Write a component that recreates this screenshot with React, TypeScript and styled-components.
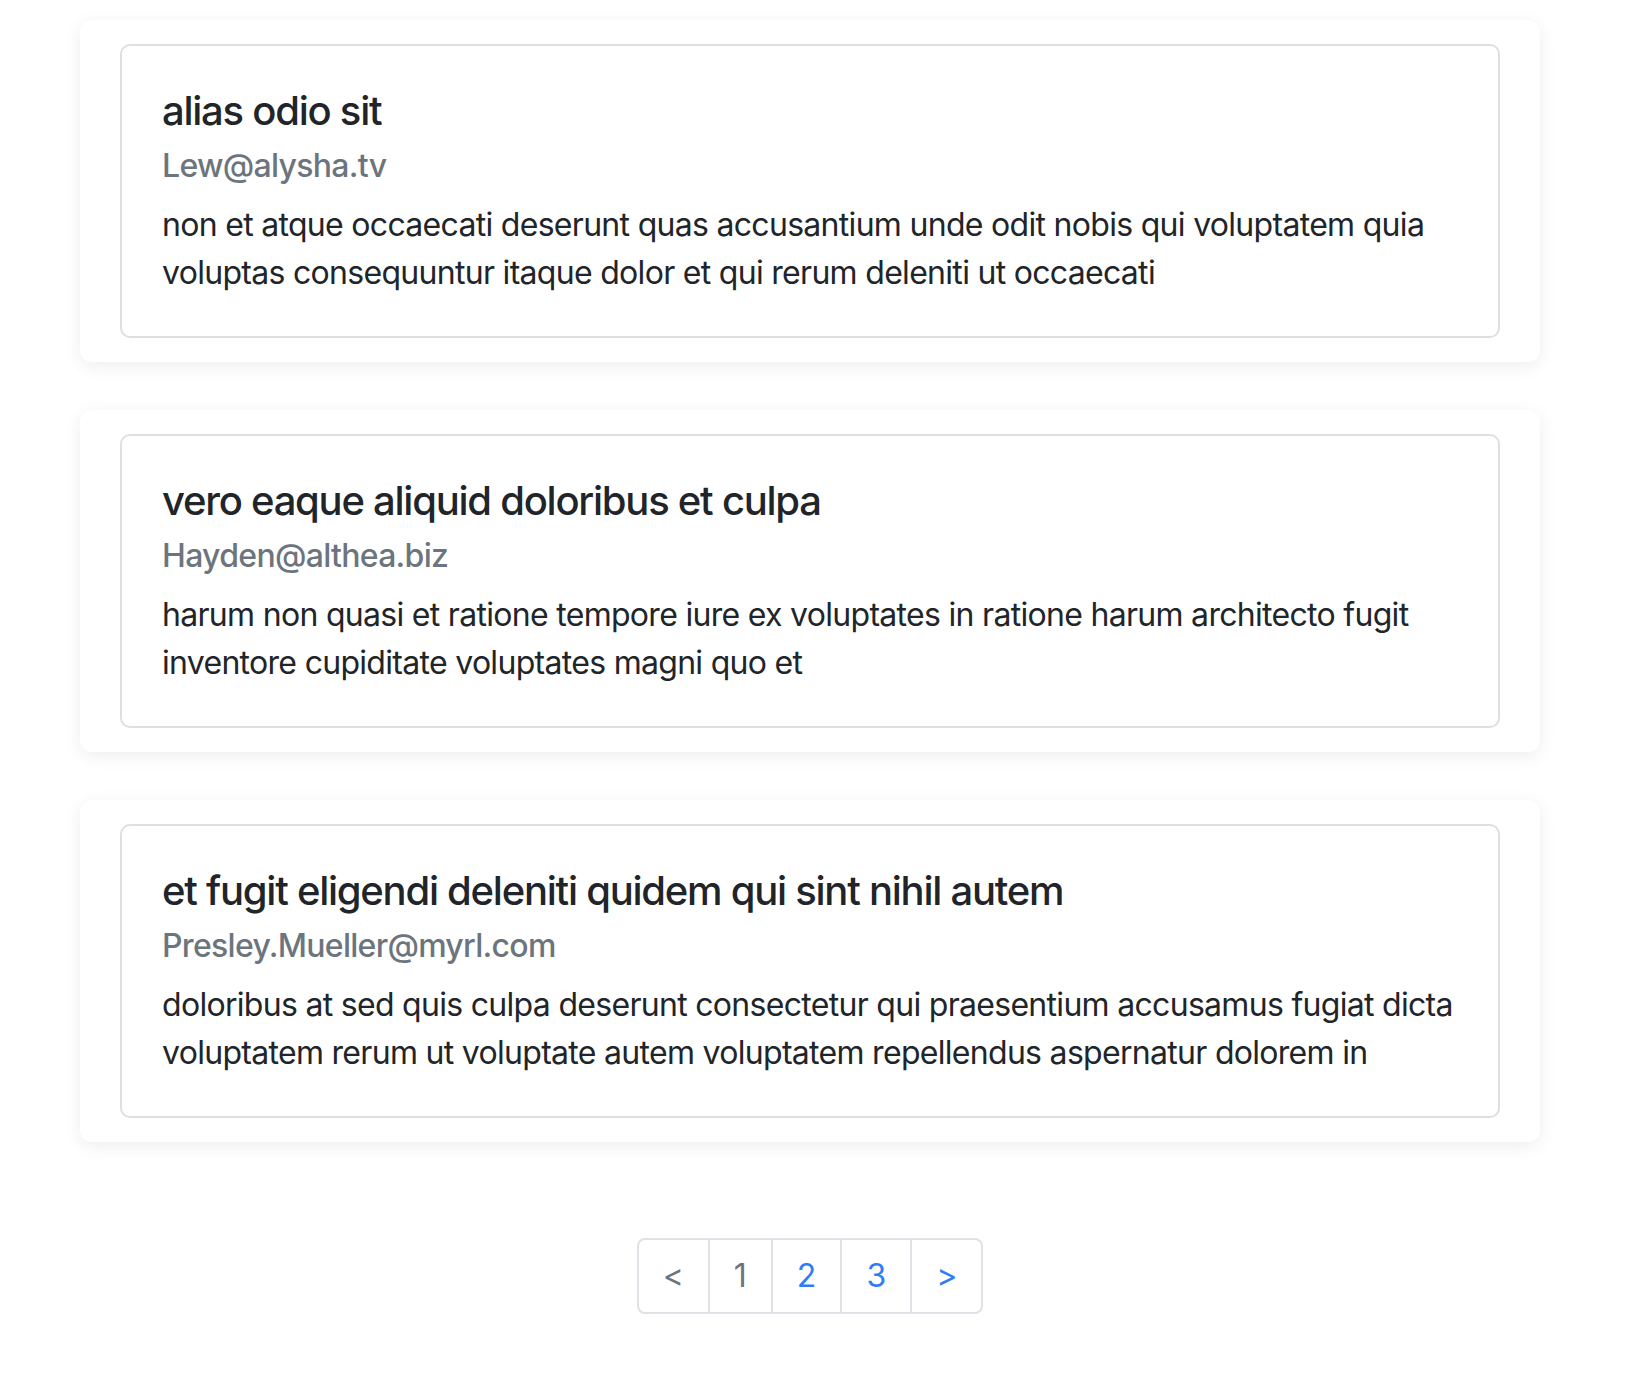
import styled, { createGlobalStyle } from "styled-components";

type Post = {
  id: number;
  title: string;
  email: string;
  body: string;
};

const posts: Post[] = [
  {
    id: 1,
    title: "alias odio sit",
    email: "Lew@alysha.tv",
    body: "non et atque occaecati deserunt quas accusantium unde odit nobis qui voluptatem quia voluptas consequuntur itaque dolor et qui rerum deleniti ut occaecati",
  },
  {
    id: 2,
    title: "vero eaque aliquid doloribus et culpa",
    email: "Hayden@althea.biz",
    body: "harum non quasi et ratione tempore iure ex voluptates in ratione harum architecto fugit inventore cupiditate voluptates magni quo et",
  },
  {
    id: 3,
    title: "et fugit eligendi deleniti quidem qui sint nihil autem",
    email: "Presley.Mueller@myrl.com",
    body: "doloribus at sed quis culpa deserunt consectetur qui praesentium accusamus fugiat dicta voluptatem rerum ut voluptate autem voluptatem repellendus aspernatur dolorem in",
  },
];

const pages = ["<", "1", "2", "3", ">"];
const currentPage = "1";

const App: React.FC = () => {
  return (
    <>
      <GlobalStyle />
      <Page>
        <List>
          {posts.map((p) => (
            <Shell key={p.id}>
              <Card>
                <Title>{p.title}</Title>
                <Email>{p.email}</Email>
                <Body>{p.body}</Body>
              </Card>
            </Shell>
          ))}
        </List>
        <Pager>
          {pages.map((label, i) => (
            <PageLink
              key={i}
              $muted={label === currentPage || label === "<"}
            >
              {label}
            </PageLink>
          ))}
        </Pager>
      </Page>
    </>
  );
};

const GlobalStyle = createGlobalStyle`
  body {
    margin: 0;
    background: #fff;
    font-family: Inter, "Noto Sans", "Liberation Sans", sans-serif;
    color: #212529;
  }
`;

const Page = styled.div`
  width: 1620px;
  padding: 20px 80px 80px;
  box-sizing: border-box;
`;

const List = styled.div`
  display: flex;
  flex-direction: column;
  gap: 48px;
`;

const Shell = styled.div`
  background: #fff;
  border-radius: 12px;
  box-shadow: 0 4px 18px rgba(0, 0, 0, 0.07);
  padding: 24px 40px;
`;

const Card = styled.div`
  border: 2px solid #dfdfdf;
  border-radius: 10px;
  padding: 41px 40px 39px;
  display: flex;
  flex-direction: column;
`;

const Title = styled.div`
  font-size: 40px;
  line-height: 48px;
  font-weight: 500;
  letter-spacing: -1.25px;
  color: #212529;
`;

const Email = styled.div`
  margin-top: 12px;
  font-size: 32px;
  line-height: 38px;
  font-weight: 500;
  letter-spacing: -0.7px;
  color: #6c757d;
`;

const Body = styled.p`
  margin: 16px 0 0;
  font-size: 32px;
  line-height: 48px;
  letter-spacing: -0.7px;
`;

const Pager = styled.div`
  display: flex;
  justify-content: center;
  margin-top: 96px;
`;

const PageLink = styled.div<{ $muted: boolean }>`
  padding: 16px 24px;
  font-size: 32px;
  line-height: 40px;
  color: ${(p) => (p.$muted ? "#6c757d" : "#2f7cf6")};
  border: 2px solid #dee2e6;
  margin-left: -2px;
  &:first-child {
    margin-left: 0;
    border-radius: 8px 0 0 8px;
  }
  &:last-child {
    border-radius: 0 8px 8px 0;
  }
`;

export default App;
